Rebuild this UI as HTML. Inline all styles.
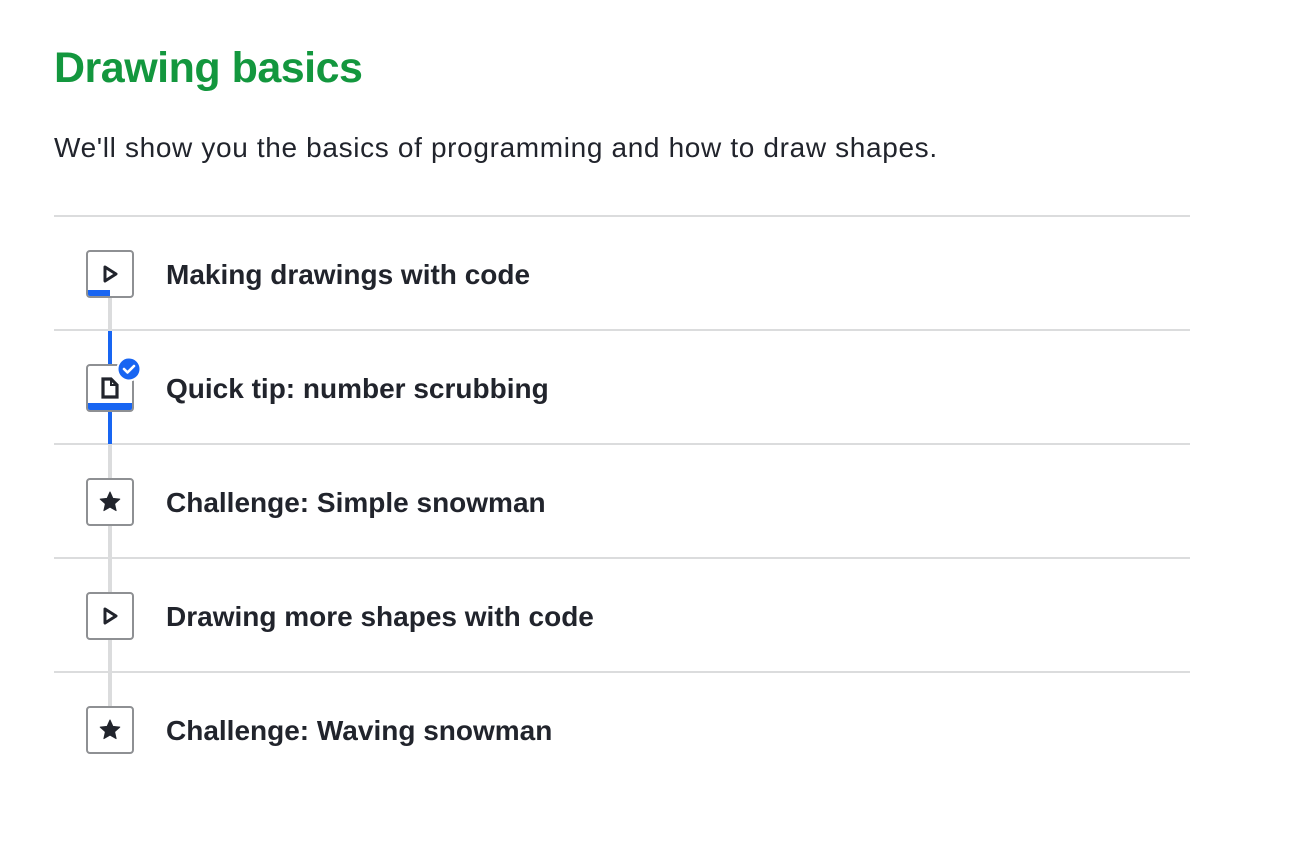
<!DOCTYPE html>
<html><head><meta charset="utf-8"><style>
body{margin:0;background:#fff;width:1302px;height:862px;overflow:hidden;font-family:"Liberation Sans",sans-serif;color:#21242c;position:relative}
h1{position:absolute;left:54px;top:38px;margin:0;font-size:43px;font-weight:bold;color:#13973e;letter-spacing:-0.5px;line-height:60px}
p{position:absolute;left:54px;top:130px;margin:0;font-size:28px;line-height:36px;letter-spacing:0.65px}
.sep{position:absolute;left:54px;width:1136px;height:2px;background:#dbdcdd}
.line{position:absolute;left:108px;width:4px}
.box{position:absolute;left:86px;width:44px;height:44px;border:2px solid #8e9093;border-radius:4px;background:#fff;overflow:hidden}
.box svg{position:absolute;left:8px;top:8px}
.title{position:absolute;left:166px;font-size:28px;font-weight:bold;line-height:30px}
</style></head><body>
<h1>Drawing basics</h1>
<p>We'll show you the basics of programming and how to draw shapes.</p>
<div class="sep" style="top:215px"></div>
<div class="sep" style="top:329px"></div>
<div class="sep" style="top:443px"></div>
<div class="sep" style="top:557px"></div>
<div class="sep" style="top:671px"></div>
<div class="line" style="top:296px;height:434px;background:#dbdcdd"></div>
<div class="line" style="top:331px;height:113px;background:#1865f2"></div>

<div class="box" style="top:250px"><svg width="28" height="28" viewBox="0 0 28 28"><path d="M9 7 L20 14 L9 21 Z" fill="none" stroke="#21242c" stroke-width="3" stroke-linejoin="round"/></svg><div style="position:absolute;left:0;bottom:0;width:22px;height:6px;background:#1865f2"></div></div>
<div class="title" style="top:260px">Making drawings with code</div>

<div class="box" style="top:364px"><svg width="28" height="28" viewBox="0 0 28 28"><path d="M7 5 H15 L21 11 V23 H7 Z" fill="none" stroke="#21242c" stroke-width="3.2" stroke-linejoin="miter"/><path d="M15 5 V11 H21" fill="none" stroke="#21242c" stroke-width="2"/></svg><div style="position:absolute;left:0;bottom:0;width:100%;height:7px;background:#1865f2"></div></div>
<svg style="position:absolute;left:116px;top:356px" width="26" height="26" viewBox="0 0 26 26"><circle cx="13" cy="13" r="11.5" fill="#1865f2" stroke="#fff" stroke-width="2"/><path d="M8 13 L11.5 16.5 L18 10" fill="none" stroke="#fff" stroke-width="2.6" stroke-linecap="round" stroke-linejoin="round"/></svg>
<div class="title" style="top:374px">Quick tip: number scrubbing</div>

<div class="box" style="top:478px"><svg width="28" height="28" viewBox="0 0 28 28"><path d="M14 4 L16.9 10.4 L23.8 11.1 L18.6 15.8 L20.1 22.6 L14 19.1 L7.9 22.6 L9.4 15.8 L4.2 11.1 L11.1 10.4 Z" fill="#21242c" stroke="#21242c" stroke-width="1" stroke-linejoin="round"/></svg></div>
<div class="title" style="top:488px">Challenge: Simple snowman</div>

<div class="box" style="top:592px"><svg width="28" height="28" viewBox="0 0 28 28"><path d="M9 7 L20 14 L9 21 Z" fill="none" stroke="#21242c" stroke-width="3" stroke-linejoin="round"/></svg></div>
<div class="title" style="top:602px">Drawing more shapes with code</div>

<div class="box" style="top:706px"><svg width="28" height="28" viewBox="0 0 28 28"><path d="M14 4 L16.9 10.4 L23.8 11.1 L18.6 15.8 L20.1 22.6 L14 19.1 L7.9 22.6 L9.4 15.8 L4.2 11.1 L11.1 10.4 Z" fill="#21242c" stroke="#21242c" stroke-width="1" stroke-linejoin="round"/></svg></div>
<div class="title" style="top:716px">Challenge: Waving snowman</div>
</body></html>
